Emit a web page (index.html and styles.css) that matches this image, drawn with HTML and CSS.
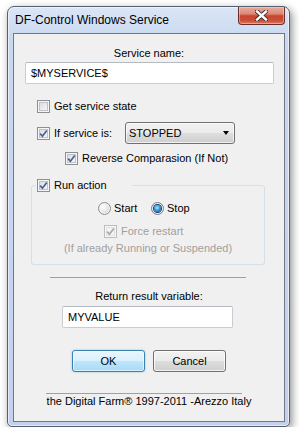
FILE: index.html
```html
<!DOCTYPE html>
<html>
<head>
<meta charset="utf-8">
<link rel="stylesheet" href="styles.css">
</head>
<body>
<div class="window">
  <div class="titlebar">
    <span class="title">DF-Control Windows Service</span>
    <span class="close">
      <svg width="13" height="11" viewBox="0 0 13 11">
        <path d="M2 1.5 L11 9.5 M11 1.5 L2 9.5" stroke="#3a2a2a" stroke-width="4.2" stroke-linecap="square" fill="none"/>
        <path d="M2 1.5 L11 9.5 M11 1.5 L2 9.5" stroke="#ffffff" stroke-width="2.4" stroke-linecap="square" fill="none"/>
      </svg>
    </span>
  </div>
  <div class="client">
    <div class="center-label service-label">Service name:</div>
    <div class="textbox service-input">$MYSERVICE$</div>

    <div class="row row-get">
      <span class="cb"></span>
      <span class="cb-text">Get service state</span>
    </div>

    <div class="row row-if">
      <span class="cb"><svg class="tick" width="13" height="13" viewBox="0 0 13 13"><path d="M3.2 6.6 L5.4 9.2 L9.8 3.4" stroke="#4a5f97" stroke-width="1.7" fill="none"/></svg></span>
      <span class="cb-text if-label">If service is:</span>
      <div class="combo"><span>STOPPED</span><span class="arrow"></span></div>
    </div>

    <div class="row row-rev">
      <span class="cb"><svg class="tick" width="13" height="13" viewBox="0 0 13 13"><path d="M3.2 6.6 L5.4 9.2 L9.8 3.4" stroke="#4a5f97" stroke-width="1.7" fill="none"/></svg></span>
      <span class="cb-text">Reverse Comparasion (If Not)</span>
    </div>

    <fieldset class="group">
      <legend class="row legend">
        <span class="cb"><svg class="tick" width="13" height="13" viewBox="0 0 13 13"><path d="M3.2 6.6 L5.4 9.2 L9.8 3.4" stroke="#4a5f97" stroke-width="1.7" fill="none"/></svg></span>
        <span class="cb-text">Run action</span>
      </legend>
      <div class="radios">
        <label class="radio-opt start"><span class="rb"></span><span class="cb-text">Start</span></label>
        <label class="radio-opt"><span class="rb on"><span class="dot"></span></span><span class="cb-text">Stop</span></label>
      </div>
      <div class="row force">
        <span class="cb disabled"><svg class="tick" width="13" height="13" viewBox="0 0 13 13"><path d="M3.2 6.6 L5.4 9.2 L9.8 3.4" stroke="#a8a8a8" stroke-width="1.7" fill="none"/></svg></span>
        <span class="cb-text dim">Force restart</span>
      </div>
      <div class="hint">(If already Running or Suspended)</div>
    </fieldset>

    <div class="sep sep1"></div>
    <div class="center-label return-label">Return result variable:</div>
    <div class="textbox return-input">MYVALUE</div>

    <div class="buttons">
      <div class="btn default">OK</div>
      <div class="btn">Cancel</div>
    </div>

    <div class="sep sep2"></div>
    <div class="footer">the Digital Farm® 1997-2011 -Arezzo Italy</div>
  </div>
</div>
</body>
</html>
```
FILE: styles.css
```css
* { box-sizing: border-box; }

body {
  margin: 0;
  background: #ffffff;
  font-family: "Liberation Sans", Arial, sans-serif;
  font-size: 11px;
  line-height: 13px;
  color: #000;
}

.window {
  margin: 6px 0 0 7px;
  width: 283px;
  border: 1px solid #55606e;
  border-radius: 7px 7px 5px 5px;
  background: linear-gradient(180deg, #dbe6f6 0%, #c9d8f0 8%, #c3d1ef 100%);
  box-shadow: 2px 3px 9px rgba(0, 0, 0, 0.45), inset 0 0 0 1px rgba(255, 255, 255, 0.55);
  padding: 0 4px 4px 5px;
}

.titlebar {
  display: flex;
  align-items: flex-start;
  height: 26px;
}

.title {
  font-size: 12px;
  line-height: 14px;
  margin-top: 6px;
  padding-left: 2px;
  color: #000;
}

.close {
  margin-left: auto;
  width: 47px;
  height: 18px;
  border: 1px solid #6a2e27;
  border-top: none;
  border-radius: 0 0 4px 4px;
  background: linear-gradient(180deg, #e9aa9c 0%, #dc8b79 40%, #c8452f 52%, #c9503a 80%, #e07a62 100%);
  box-shadow: inset 0 0 0 1px rgba(255, 220, 210, 0.45);
  display: flex;
  align-items: center;
  justify-content: center;
}

.client {
  height: 389px;
  border: 1px solid #6f7884;
  background: #f0f0f0;
}

.center-label {
  text-align: center;
  height: 13px;
}

.service-label { margin-top: 13px; }

.textbox {
  height: 22px;
  border: 1px solid #c9ccd2;
  border-top-color: #b5b9c0;
  border-radius: 2px;
  background: #fff;
  line-height: 20px;
  padding-left: 5px;
}

.service-input {
  margin: 2px 0 0 11px;
  width: 249px;
}

.row {
  display: flex;
  align-items: center;
}

.cb {
  width: 13px;
  height: 13px;
  flex: none;
  border: 1px solid #8f8f8f;
  background: linear-gradient(135deg, #d4d6da 0%, #eeeeef 60%, #fbfbfb 100%);
  box-shadow: inset 0 0 0 1px #f6f6f6, inset 0 0 0 2px #bfc3c9;
  position: relative;
}

.cb .tick {
  position: absolute;
  left: -1px;
  top: -1px;
}

.cb.disabled {
  border-color: #bdbdbd;
  background: #f4f4f4;
  box-shadow: inset 0 0 0 1px #f8f8f8, inset 0 0 0 2px #e0e0e0;
}

.cb-text {
  margin-left: 4px;
  white-space: nowrap;
}

.dim { color: #a0a0a0; }

.row-get {
  margin: 16px 0 0 23px;
  height: 13px;
}

.row-if {
  margin: 9px 0 0 23px;
  height: 22px;
}

.if-label { width: 71px; }

.combo {
  width: 110px;
  height: 22px;
  border: 1px solid #707070;
  border-radius: 3px;
  background: linear-gradient(180deg, #f2f2f2 0%, #ebebeb 48%, #dddddd 52%, #cfcfcf 100%);
  box-shadow: inset 0 0 0 1px rgba(255, 255, 255, 0.7);
  display: flex;
  align-items: center;
  padding: 0 5px 0 3px;
}

.combo span:first-child { flex: 1; }

.arrow {
  width: 0;
  height: 0;
  border-left: 3.5px solid transparent;
  border-right: 3.5px solid transparent;
  border-top: 4px solid #000;
}

.row-rev {
  margin: 8px 0 0 51px;
  height: 13px;
}

.group {
  margin: 14px 0 0 17px;
  width: 234px;
  padding: 0 0 9px 0;
  border: 1px solid #d5dfe5;
  border-radius: 3px;
  min-width: 0;
}

.legend {
  margin-left: 4px;
  padding: 0 0 0 1px;
  width: 96px;
  height: 13px;
}

.radios {
  display: flex;
  margin: 10px 0 0 66px;
  height: 13px;
}

.radio-opt {
  display: flex;
  align-items: center;
}

.radio-opt.start { width: 53px; }

.rb {
  width: 13px;
  height: 13px;
  border-radius: 50%;
  border: 1px solid #8e8f8f;
  background: radial-gradient(circle at 35% 35%, #ffffff 0%, #eaeaea 45%, #c9c9c9 100%);
  box-shadow: inset 0 0 0 1px #f4f4f4;
  display: flex;
  align-items: center;
  justify-content: center;
}

.rb.on { border-color: #6d7f96; }

.dot {
  width: 7px;
  height: 7px;
  border-radius: 50%;
  background: radial-gradient(circle at 45% 40%, #a9ecff 0%, #3ba8e6 40%, #1763ae 75%, #123c74 100%);
  box-shadow: 0 0 0 1px #21395a;
}

.radio-opt .cb-text { margin-left: 3px; }

.force {
  margin: 10px 0 0 72px;
  height: 13px;
}

.hint {
  margin-top: 4px;
  text-align: center;
  color: #a0a0a0;
  height: 13px;
}

.sep {
  width: 196px;
  height: 1px;
  background: #a0a0a0;
}

.sep1 { margin: 12px 0 0 36px; }

.return-label { margin-top: 12px; }

.return-input {
  margin: 3px 0 0 48px;
  width: 171px;
}

.buttons {
  display: flex;
  gap: 8px;
  margin: 22px 0 0 58px;
}

.btn {
  width: 73px;
  height: 22px;
  border: 1px solid #707070;
  border-radius: 3px;
  background: linear-gradient(180deg, #f2f2f2 0%, #ebebeb 48%, #dddddd 52%, #cfcfcf 100%);
  box-shadow: inset 0 0 0 1px rgba(255, 255, 255, 0.75);
  text-align: center;
  line-height: 20px;
}

.btn.default {
  border-color: #3c7fb1;
  background: linear-gradient(180deg, #eaf6fd 0%, #d9f0fc 48%, #bee6fd 52%, #a7d9f5 100%);
  box-shadow: inset 0 0 0 1px rgba(255, 255, 255, 0.6), 0 0 2px rgba(60, 160, 230, 0.6);
}

.sep2 { margin: 21px 0 0 32px; }

.footer {
  margin-top: 1px;
  text-align: center;
  height: 13px;
}
```
